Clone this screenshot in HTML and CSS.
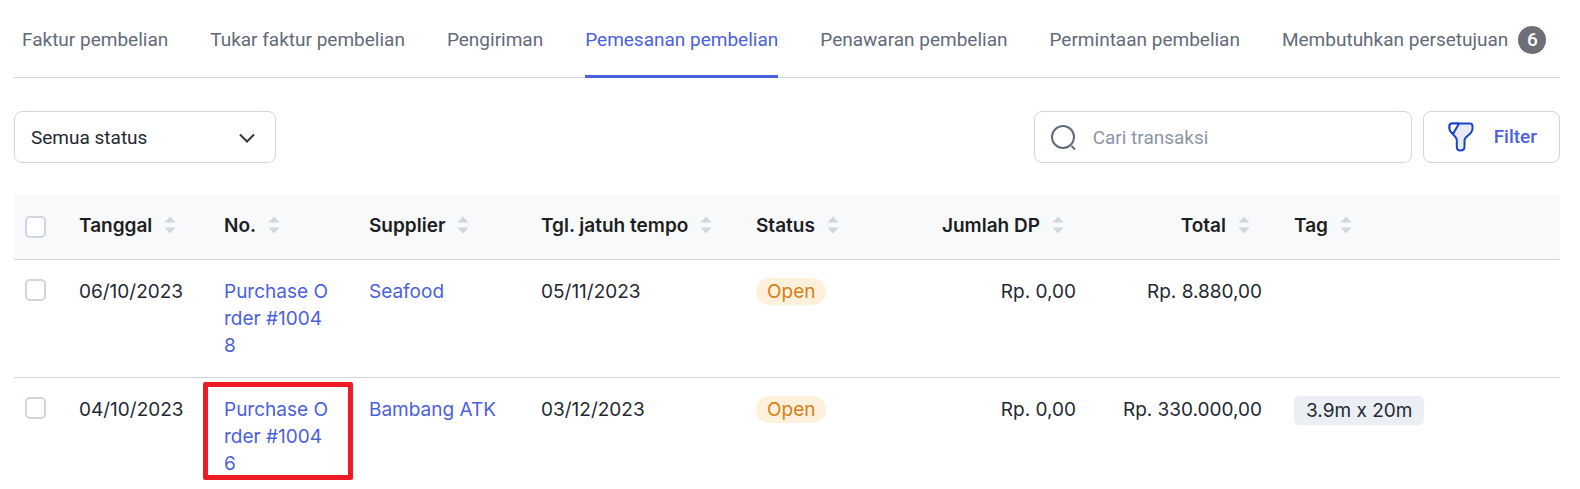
FILE: index.html
```html
<!DOCTYPE html>
<html lang="id">
<head>
    <meta charset="UTF-8">
    <meta name="viewport" content="width=device-width, initial-scale=1.0">
    <title>Pemesanan pembelian</title>
    <link rel="stylesheet" href="styles.css">
</head>
<body>
    <!-- sort arrows, reused in every table heading -->
    <svg class="sprite" aria-hidden="true">
        <symbol id="sort" viewBox="0 0 12 18">
            <path d="M6 0.5L11.5 6.5H0.5z M6 17.5L0.5 11.5H11.5z"/>
        </symbol>
    </svg>

    <nav class="tabs">
        <a href="#">Faktur pembelian</a>
        <a href="#">Tukar faktur pembelian</a>
        <a href="#">Pengiriman</a>
        <a href="#" class="active" aria-current="page">Pemesanan pembelian</a>
        <a href="#">Penawaran pembelian</a>
        <a href="#">Permintaan pembelian</a>
        <a href="#">Membutuhkan persetujuan <span class="count">6</span></a>
    </nav>

    <div class="toolbar">
        <div class="select">
            <select aria-label="Status">
                <option>Semua status</option>
            </select>
            <svg class="chevron" viewBox="0 0 16 10" aria-hidden="true">
                <path d="M1 1.5l7 7 7-7"/>
            </svg>
        </div>
        <div class="search">
            <svg viewBox="0 0 26 26" aria-hidden="true">
                <circle cx="12" cy="13" r="11"/>
                <path d="M20.5 22l3.5 3.5"/>
            </svg>
            <input type="text" placeholder="Cari transaksi" aria-label="Cari transaksi">
        </div>
        <button type="button" class="filter">
            <svg viewBox="0 0 26 30" aria-hidden="true">
                <path d="M4 1.5H22C23.8 1.5 24.5 2.5 24.5 4V7C24.5 8.8 23.6 10 22.5 11.2L18 15.2C17 16.2 16.5 17 16.5 18.5V24.5C16.5 27 15 28.5 12.5 28.5S8.8 27 8.8 25V18.5C8.8 17 8.3 16 7.4 15L3.2 10.2C2 8.8 1.5 8 1.5 6.5V4C1.5 2.4 2.4 1.5 4 1.5z" fill="#e8eafb"/>
                <path d="M11 1.5L5 12 L3.2 10.2C2 8.8 1.5 8 1.5 6.5V4C1.5 2.4 2.4 1.5 4 1.5z" fill="#fff"/>
            </svg>
            Filter
        </button>
    </div>

    <table>
        <colgroup>
            <col class="col-check">
            <col class="col-date">
            <col class="col-no">
            <col class="col-supplier">
            <col class="col-due">
            <col class="col-status">
            <col class="col-dp">
            <col class="col-total">
            <col>
        </colgroup>
        <thead>
            <tr>
                <th class="check"><input type="checkbox" aria-label="Pilih semua"></th>
                <th>Tanggal<svg class="sort"><use href="#sort"/></svg></th>
                <th>No.<svg class="sort"><use href="#sort"/></svg></th>
                <th>Supplier<svg class="sort"><use href="#sort"/></svg></th>
                <th>Tgl. jatuh tempo<svg class="sort"><use href="#sort"/></svg></th>
                <th>Status<svg class="sort"><use href="#sort"/></svg></th>
                <th class="num">Jumlah DP<svg class="sort"><use href="#sort"/></svg></th>
                <th class="num">Total<svg class="sort"><use href="#sort"/></svg></th>
                <th>Tag<svg class="sort"><use href="#sort"/></svg></th>
            </tr>
        </thead>
        <tbody>
            <tr>
                <td class="check"><input type="checkbox" aria-label="Pilih Purchase Order #10048"></td>
                <td>06/10/2023</td>
                <td class="no"><a href="#">Purchase Order #10048</a></td>
                <td><a href="#">Seafood</a></td>
                <td>05/11/2023</td>
                <td><span class="status">Open</span></td>
                <td class="num">Rp. 0,00</td>
                <td class="num">Rp. 8.880,00</td>
                <td></td>
            </tr>
            <tr>
                <td class="check"><input type="checkbox" aria-label="Pilih Purchase Order #10046"></td>
                <td>04/10/2023</td>
                <td class="no marked"><a href="#">Purchase Order #10046</a></td>
                <td><a href="#">Bambang ATK</a></td>
                <td>03/12/2023</td>
                <td><span class="status">Open</span></td>
                <td class="num">Rp. 0,00</td>
                <td class="num">Rp. 330.000,00</td>
                <td><span class="tag">3.9m x 20m</span></td>
            </tr>
        </tbody>
    </table>
</body>
</html>
```
FILE: styles.css
```css
* {
    box-sizing: border-box;
}
body {
    margin: 0;
    padding: 0 20px 0 14px;
    background: #fff;
    color: #232933;
    font-family: Inter, sans-serif;
    font-size: 19px;
    line-height: 27px;
}
a {
    color: #4b61dd;
    text-decoration: none;
}
.sprite {
    display: none;
}

/* tabs */
.tabs {
    display: flex;
    gap: 42px;
    padding: 0 8px;
    border-bottom: 1px solid #d0d6dd;
    font-family: Roboto, sans-serif;
    white-space: nowrap;
}
.tabs a {
    display: flex;
    align-items: center;
    height: 78px;
    margin-bottom: -1px;
    border-bottom: 3px solid transparent;
    padding-top: 4px;
    color: #626b79;
}
.tabs .active {
    color: #4b61dd;
    border-color: #4b61dd;
}
.count {
    width: 28px;
    height: 28px;
    margin-left: 10px;
    border-radius: 50%;
    background: #6e6e78;
    color: #fff;
    font-weight: 500;
    line-height: 28px;
    text-align: center;
}

/* toolbar */
.toolbar {
    display: flex;
    gap: 11px;
    padding: 33px 0 32px;
    font-family: Roboto, sans-serif;
}
.select,
.search,
.filter {
    height: 52px;
    border: 1px solid #d0d6dd;
    border-radius: 8px;
    background: #fff;
}
.select {
    position: relative;
    width: 262px;
    margin-right: auto;
}
.select select {
    width: 100%;
    height: 100%;
    padding: 0 16px;
    border: 0;
    border-radius: 8px;
    background: none;
    color: #232933;
    font: inherit;
    appearance: none;
}
.chevron {
    position: absolute;
    top: 21px;
    right: 20px;
    width: 16px;
    height: 10px;
    fill: none;
    stroke: #33373d;
    stroke-width: 2;
    pointer-events: none;
}
.search {
    display: flex;
    align-items: center;
    gap: 16px;
    width: 378px;
    padding: 0 16px;
}
.search svg {
    flex: none;
    width: 26px;
    height: 26px;
    fill: none;
    stroke: #626b79;
    stroke-width: 2;
}
.search input {
    flex: 1;
    min-width: 0;
    padding: 0;
    border: 0;
    outline: 0;
    background: none;
    font: inherit;
}
.search input::placeholder {
    color: #8b95a5;
}
.filter {
    display: flex;
    align-items: center;
    gap: 20px;
    padding: 0 22px 1px 24px;
    color: #4b61dd;
    font: inherit;
    font-weight: 500;
}
.filter svg {
    width: 26px;
    height: 30px;
    stroke: #1a44c8;
    stroke-width: 2;
    stroke-linejoin: round;
}

/* table */
table {
    width: 100%;
    border-collapse: separate;
    border-spacing: 0;
    table-layout: fixed;
}
.col-check {
    width: 49px;
}
.col-date {
    width: 145px;
}
.col-no {
    width: 145px;
}
.col-supplier {
    width: 172px;
}
.col-due {
    width: 215px;
}
.col-status {
    width: 160px;
}
.col-dp {
    width: 192px;
}
.col-total {
    width: 186px;
}
th {
    height: 65px;
    padding: 0 16px 3px;
    background: #f8f9fb;
    border-bottom: 1px solid #d0d6dd;
    color: #1c1e22;
    font-weight: 600;
    text-align: left;
    white-space: nowrap;
}
td {
    padding: 18px 16px;
    border-bottom: 1px solid #d0d6dd;
    vertical-align: top;
}
tr:last-child td {
    padding-bottom: 3px;
    border-bottom: 0;
}
.num {
    text-align: right;
}
.check {
    padding-left: 11px;
    padding-right: 0;
}
.check input {
    display: block;
    width: 21px;
    height: 22px;
    margin: 1px 0 0;
    border: 2px solid #d0d6dd;
    border-radius: 5px;
    background: #fff;
    appearance: none;
}
.check input:checked {
    background: #4b61dd;
    border-color: #4b61dd;
}
th.check {
    padding-bottom: 2px;
}
.sort {
    width: 12px;
    height: 18px;
    margin: 0 12px;
    fill: #d0d6dd;
    vertical-align: -2px;
}
/* order numbers break anywhere, the column is narrow */
.no {
    padding-right: 22px;
    word-break: break-all;
}
.marked {
    position: relative;
}
.marked::after {
    content: "";
    position: absolute;
    inset: 4px 0 0 -5px;
    border: 5px solid #ed1c24;
    border-radius: 2px;
    pointer-events: none;
}
.status,
.tag {
    display: inline-block;
    padding: 0 11px;
}
.status {
    border-radius: 14px;
    background: #fdf1dc;
    color: #db7d15;
}
.tag {
    padding: 1px 12px;
    border-radius: 5px;
    background: #ebeff3;
}
```
